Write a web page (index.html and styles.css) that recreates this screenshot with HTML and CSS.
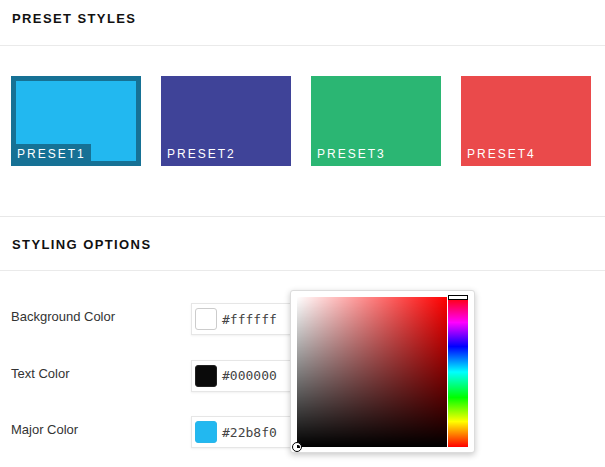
FILE: index.html
```html
<!DOCTYPE html>
<html>
<head>
<meta charset="utf-8">
<link rel="stylesheet" href="styles.css">
</head>
<body>
<div class="page">
  <div class="section-head first"><h2 class="title">PRESET STYLES</h2></div>
  <div class="presets">
    <div class="preset active p1"><span class="preset-label">PRESET1</span></div>
    <div class="preset p2"><span class="preset-label">PRESET2</span></div>
    <div class="preset p3"><span class="preset-label">PRESET3</span></div>
    <div class="preset p4"><span class="preset-label">PRESET4</span></div>
  </div>
  <div class="section-head second"><h2 class="title">STYLING OPTIONS</h2></div>
  <div class="options">
    <div class="opt-row">
      <div class="opt-label">Background Color</div>
      <div class="color-input"><span class="swatch sw-white"></span><span class="hex">#ffffff</span></div>
    </div>
    <div class="opt-row">
      <div class="opt-label">Text Color</div>
      <div class="color-input"><span class="swatch sw-black"></span><span class="hex">#000000</span></div>
    </div>
    <div class="opt-row">
      <div class="opt-label">Major Color</div>
      <div class="color-input"><span class="swatch sw-blue"></span><span class="hex">#22b8f0</span></div>
    </div>
  </div>
  <div class="picker">
    <div class="sv"><span class="sv-handle"></span></div>
    <div class="hue"><span class="hue-handle"></span></div>
  </div>
</div>
</body>
</html>
```
FILE: styles.css
```css
html, body { margin: 0; padding: 0; background: #fff; }
body { font-family: "Liberation Sans", Arial, sans-serif; color: #333; }
.page { position: relative; width: 605px; height: 467px; overflow: hidden; }

.section-head { border-bottom: 1px solid #eaeaea; box-sizing: border-box; padding-left: 12px; }
.section-head.first { height: 46px; padding-top: 11px; }
.section-head.second { height: 55px; padding-top: 20px; border-top: 1px solid #e8e8e8; }
.title { margin: 0; font-size: 13px; line-height: 15px; font-weight: bold; letter-spacing: 1.4px; color: #111; }

.presets { display: flex; gap: 20px; padding: 30px 0 50px 11px; }
.preset { width: 130px; height: 90px; box-sizing: border-box; border: 5px solid transparent; display: flex; align-items: flex-end; }
.preset.p1 { background: #22b8f0; border-color: #167195; }
.preset.p2 { background-color: #3f4398; border-color: #3f4398; }
.preset.p3 { background-color: #2bb673; border-color: #2bb673; }
.preset.p4 { background-color: #ea4a4b; border-color: #ea4a4b; }
.preset-label { display: block; height: 17px; line-height: 21px; font-size: 12px; letter-spacing: 2px; color: #fff; padding: 0 5px 0 1px; overflow: visible; }
.preset.active .preset-label { background: #167195; }

.options { padding: 32px 0 0 11px; display: flex; flex-direction: column; gap: 24.5px; }
.opt-row { display: flex; align-items: flex-start; height: 32px; }
.opt-label { width: 180px; font-size: 13px; line-height: 15px; padding-top: 6px; color: #333; }
.color-input { width: 110px; height: 32px; box-sizing: border-box; border: 1px solid #e6e6e6; box-shadow: 0 1px 2px rgba(0,0,0,0.06); display: flex; align-items: center; padding-left: 3px; gap: 5px; }
.swatch { width: 22px; height: 22px; box-sizing: border-box; border-radius: 3px; border: 1px solid #ccc; }
.sw-white { background: #fff; }
.sw-black { background: #0a0a0a; border-color: #222; }
.sw-blue { background: #22b8f0; border-color: #2ab6ea; }
.hex { font-family: "DejaVu Sans Mono", "Liberation Mono", monospace; font-size: 13px; color: #444; }

.picker { position: absolute; left: 290px; top: 290px; width: 185px; height: 163px; box-sizing: border-box; background: #fff; border: 1px solid #dcdcdc; border-radius: 3px; box-shadow: 0 2px 6px rgba(0,0,0,0.22); padding: 6px; display: flex; gap: 1px; }
.sv { position: relative; width: 151px; height: 150px; background: linear-gradient(to top, #000, rgba(0,0,0,0)), linear-gradient(to right, #fff, #f00); }
.sv-handle { position: absolute; left: -5px; bottom: -5px; width: 10px; height: 10px; box-sizing: border-box; border: 1px solid #000; border-radius: 50%; background: #fff; }
.sv-handle::after { content: ""; position: absolute; left: 4px; top: 2px; width: 3px; height: 3px; background: #000; border-radius: 0 2px 0 0; }
.hue { position: relative; width: 20px; height: 150px; background: linear-gradient(to bottom, #f00 0%, #f0f 17%, #00f 33%, #0ff 50%, #0f0 67%, #ff0 83%, #f00 100%); }
.hue-handle { position: absolute; left: 0; top: -2px; width: 20px; height: 5px; box-sizing: border-box; border: 1px solid #000; background: #fff; }
```
